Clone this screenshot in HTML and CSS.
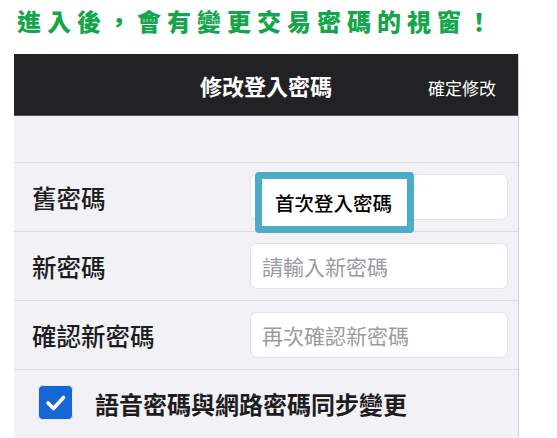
FILE: index.html
```html
<!DOCTYPE html>
<html lang="zh-Hant">
<head>
    <meta charset="UTF-8">
    <meta name="viewport" content="width=device-width, initial-scale=1.0">
    <title>修改登入密碼</title>
    <link rel="stylesheet" href="styles.css">
</head>
<body>
    <h1 class="intro">進入後，會有變更交易密碼的視窗！</h1>

    <div class="phone">
        <!-- 上方標題列 -->
        <div class="navbar">
            <span></span>
            <span class="nav-title">修改登入密碼</span>
            <span class="nav-action">確定修改</span>
        </div>

        <div class="spacer"></div>

        <!-- 舊密碼 -->
        <div class="row">
            <label class="row-label" for="old_pw">舊密碼</label>
            <div class="field">
                <input type="password" id="old_pw" class="pw-input">
                <div class="hint">首次登入密碼</div>
            </div>
        </div>

        <!-- 新密碼 -->
        <div class="row">
            <label class="row-label" for="new_pw">新密碼</label>
            <div class="field">
                <input type="password" id="new_pw" class="pw-input" placeholder="請輸入新密碼">
            </div>
        </div>

        <!-- 確認新密碼 -->
        <div class="row">
            <label class="row-label" for="confirm_pw">確認新密碼</label>
            <div class="field">
                <input type="password" id="confirm_pw" class="pw-input" placeholder="再次確認新密碼">
            </div>
        </div>

        <!-- 同步變更 -->
        <div class="check-row">
            <svg class="check-box" width="35" height="35" viewBox="0 0 35 35">
                <rect x="0.5" y="0.5" width="34" height="34" rx="4" fill="#1766d6" stroke="#e6ecf6"/>
                <path d="M10 18 L15.5 23.5 L25.5 12.5" fill="none" stroke="#fff" stroke-width="3.6" stroke-linecap="round" stroke-linejoin="round"/>
            </svg>
            <span class="check-text">語音密碼與網路密碼同步變更</span>
        </div>
    </div>
</body>
</html>
```

FILE: styles.css
```css
body {
    margin: 0;
    background-color: #fff;
    font-family: "Noto Sans CJK TC", "Noto Sans", sans-serif;
    color: #1d1d1f;
}
.intro {
    margin: 0;
    padding: 6px 0 0 17px;
    font-size: 24px;
    line-height: 30px;
    letter-spacing: 6px;
    font-weight: 900;
    color: #13a64b;
}
.phone {
    margin: 18px 0 0 14px;
    width: 504px;
    min-height: 384px;
    background-color: #f1f1f6;
    border-right: 1px solid #c7cfe0;
}
.navbar {
    height: 61px;
    display: grid;
    grid-template-columns: 1fr auto 1fr;
    align-items: center;
    background-color: #222224;
    border-bottom: 1px solid #55555b;
    color: #fff;
}
.nav-title {
    font-size: 22px;
    font-weight: bold;
}
.nav-action {
    justify-self: end;
    padding: 6px 22px 0 0;
    font-size: 17px;
}
.spacer {
    height: 46px;
    border-bottom: 1px solid #dcdce2;
}
.row {
    display: grid;
    grid-template-columns: 218px 1fr;
    align-items: center;
    padding: 11px 10px 11px 18px;
    border-bottom: 1px solid #dcdce2;
}
.row-label {
    font-size: 24.5px;
    font-weight: 500;
    color: #1d1d1f;
}
.field {
    position: relative;
}
.pw-input {
    display: block;
    box-sizing: border-box;
    width: 258px;
    height: 46px;
    padding: 0 11px;
    border: 1px solid #e3e3e8;
    border-radius: 7px;
    background-color: #fff;
    font-family: inherit;
    font-size: 21px;
    outline: none;
}
.pw-input::placeholder {
    color: #9a9aa0;
}
/* 標示框：蓋在舊密碼欄位上 */
.hint {
    position: absolute;
    left: 5px;
    top: -2px;
    width: 159px;
    height: 61px;
    box-sizing: border-box;
    display: flex;
    align-items: center;
    padding: 0 0 0 13px;
    border: 7px solid #4badc8;
    border-radius: 4px;
    background-color: #fff;
    font-size: 19.5px;
    font-weight: 500;
    color: #000;
}
.check-row {
    display: flex;
    align-items: center;
    gap: 22px;
    padding: 13px 0 0 24px;
}
.check-box {
    flex-shrink: 0;
}
.check-text {
    padding-top: 3px;
    font-size: 24px;
    font-weight: bold;
    color: #1d1d1f;
}
```
